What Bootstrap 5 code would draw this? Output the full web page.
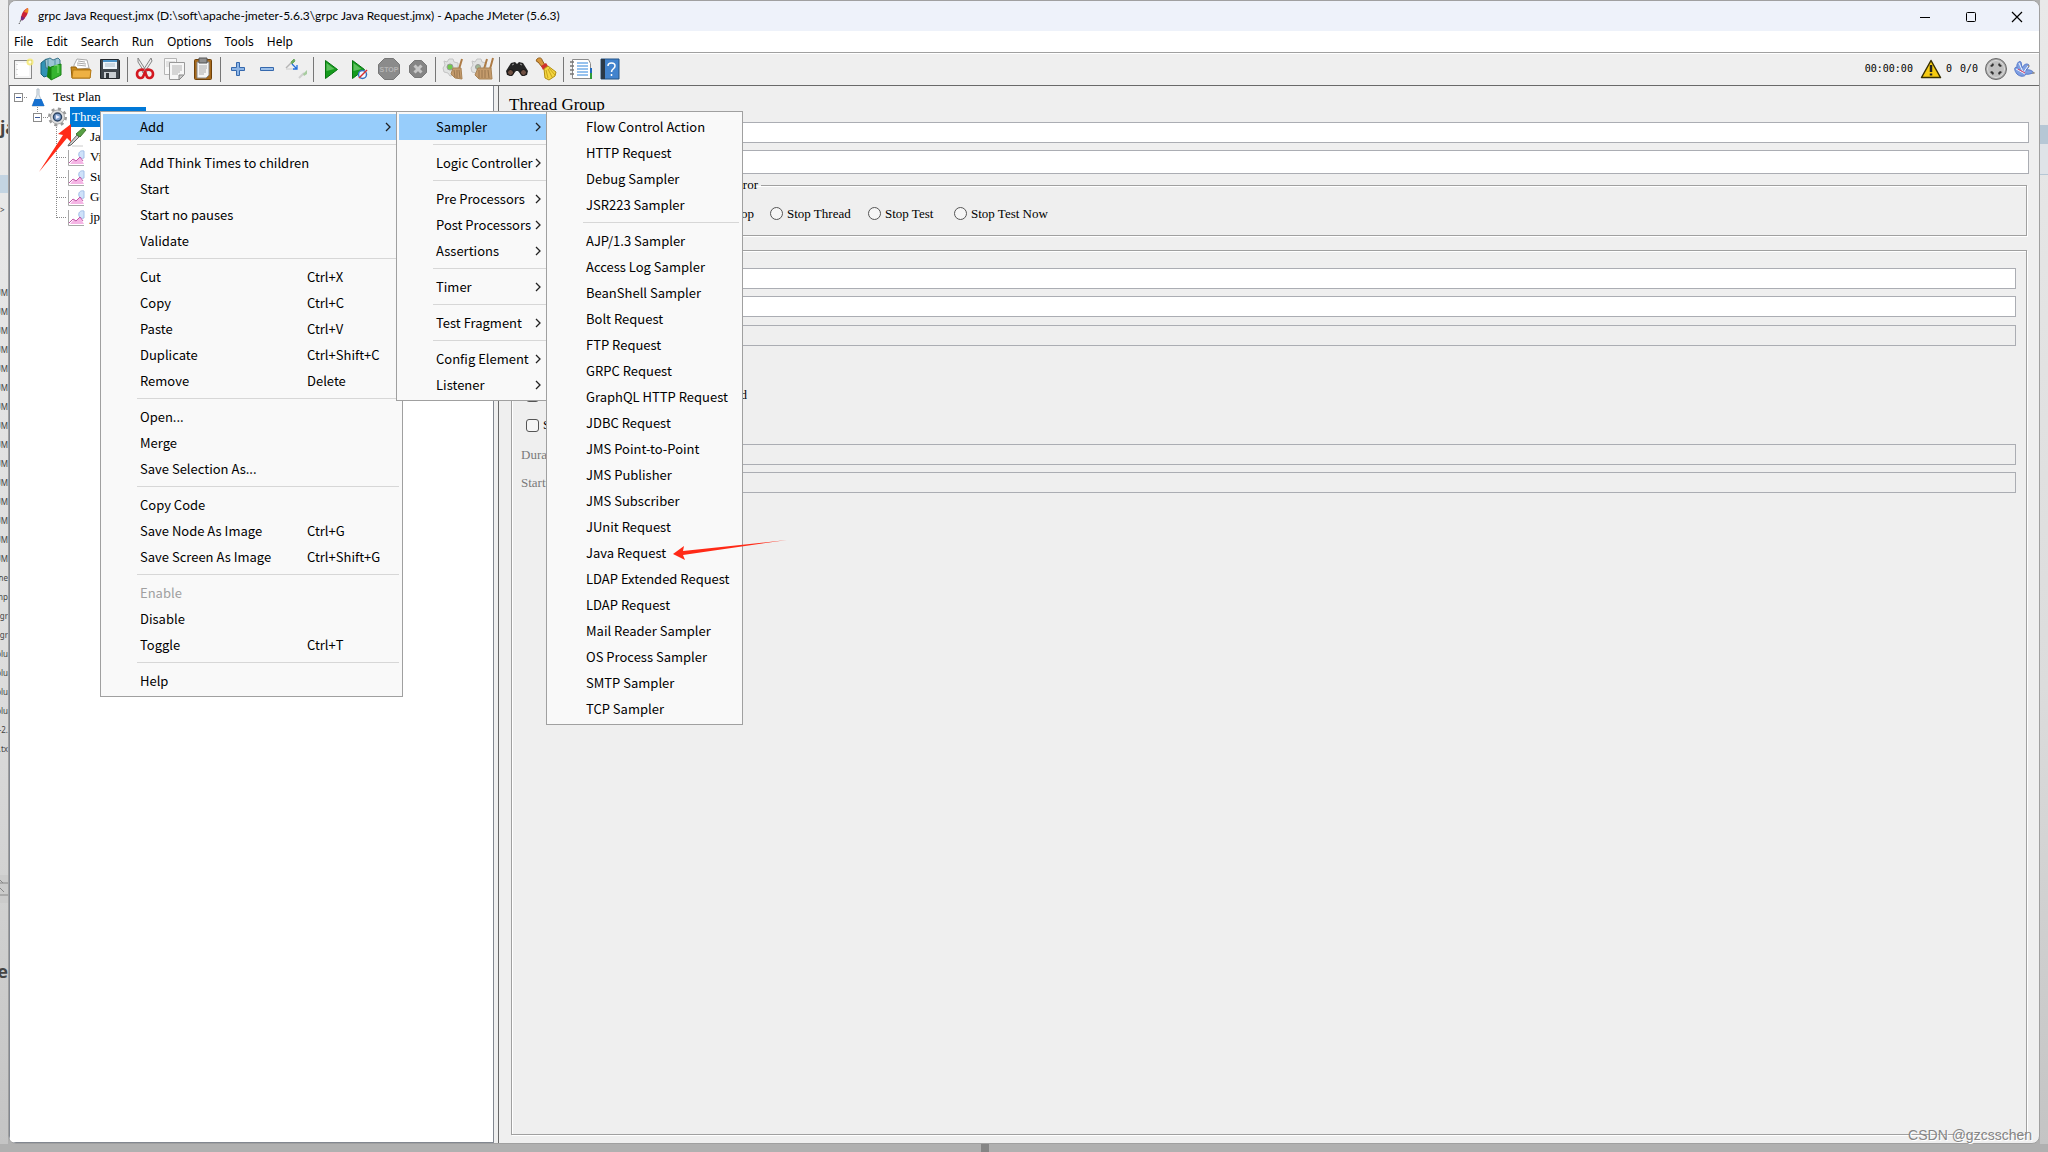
<!DOCTYPE html>
<html lang="en">
<head>
<meta charset="utf-8">
<meta name="viewport" content="width=device-width, initial-scale=1">
<title>grpc Java Request.jmx - Apache JMeter (5.6.3)</title>
<link rel="stylesheet" href="https://cdn.jsdelivr.net/npm/bootstrap@5.3.0/dist/css/bootstrap.min.css">
<script src="https://cdn.jsdelivr.net/npm/bootstrap@5.3.0/dist/js/bootstrap.bundle.min.js"></script>
<style>
  :root { --face: #efefef; --line: #a0a0a0; --dark: #696969; --ui: "Noto Sans CJK SC", "Noto Sans", sans-serif; }
  body { font: 13px/20px var(--ui); color: #000; background: #b0b0b0; }
  .side { width: 8px; flex: none; overflow: hidden; color: #444; font: 8px/19px "Noto Sans", sans-serif; }
  .side-left { background: linear-gradient(#ededed, #dcdcdc 60%, #c4c4c4); }
  .side-right { background: linear-gradient(#e9e9e9, #dcdcdc 60%, #c4c4c4); }
  .side-big { font-size: 18px; line-height: 30px; font-weight: 700; height: 30px; }
  .side-list div { height: 19px; line-height: 19px; white-space: nowrap; width: 8px; display: flex; justify-content: flex-end; }
  .desk-foot { height: 8px; background: #b0b0b0; }
  .desk-foot span { width: 8px; height: 8px; background: #858585; margin-left: 47.9%; }
  .app { border: 1px solid var(--line); border-radius: 8px; background: var(--face); overflow: hidden; min-width: 0; }
  .titlebar { height: 30px; background: #eef2fa; margin-right: -1px; }
  .titlebar .caption { font: 12px/18px Lato, "Noto Sans", sans-serif; }
  .titlebar button { width: 46px; height: 30px; border: 0; background: none; padding: 0; }
  .menus { height: 21px; background: #fff; padding-left: 5px; gap: 13px; }
  .menus button { border: 0; background: none; padding: 0; color: #000; font: 12px/20px "Noto Sans", sans-serif; }
  .tools { height: 34px; border-top: 1px solid var(--line); border-bottom: 1px solid var(--dark); box-shadow: inset 0 1px #fff; margin-left: -1px; }
  .tools button { width: 29px; height: 30px; border: 0; background: none; padding: 0; display: flex; align-items: center; justify-content: center; flex: none; }
  .tools svg, .status svg { width: 24px; height: 24px; display: block; flex: none; }
  .bar { width: 6px; flex: none; display: flex; justify-content: center; }
  .bar::before { content: ""; width: 1px; height: 25px; background: #777; }
  .status { font: 10px/14px "DejaVu Sans Mono", monospace; }
  .song { font-family: "Liberation Serif", serif; font-size: 13px; }
  .tree { width: 485px; flex: none; background: #fff; border: 1px solid #828790; border-top: 0; overflow: hidden; padding-top: 1px; }
  .tree ul { list-style: none; margin: 0; padding: 0; }
  .node { height: 20px; display: flex; align-items: center; white-space: nowrap; }
  .node svg { flex: none; display: block; }
  .node span { padding: 0 2px; line-height: 20px; }
  .node .picked { background: #0078d7; color: #fff; width: 76px; }
  .pane { border-left: 1px solid var(--dark); margin-left: 4px; padding: 0 10px 8px; min-width: 0; }
  .pane h1 { font-size: 17px; line-height: 34px; padding-top: 2px; margin: 0; font-weight: 400; }
  .field { display: flex; align-items: center; }
  .field label { width: 160px; flex: none; }
  .field input { flex: 1; min-width: 0; height: 21px; border: 1px solid #abadb3; background: #fff; padding: 0 3px; border-radius: 0; }
  .field input.tall { height: 24px; }
  .field input:disabled { background: var(--face); }
  .off label { color: #7a7a7a; }
  .group-box { border: 1px solid var(--line); box-shadow: 1px 1px #fff, inset 1px 1px #fff; margin: 0 2px; padding: 0 10px 0 9px; }
  .group-box legend { float: none; width: auto; margin: 0 0 0 -5px; padding: 0 3px 0 2px; font-size: 13px; line-height: 14px; }
  .group-box legend span { display: block; width: 240px; text-align: right; }
  .radios { display: grid; grid-template-columns: 80px 165px 98px 86px auto; height: 43px; align-items: center; padding-left: 4px; }
  .tick { display: flex; align-items: center; gap: 4px; white-space: nowrap; }
  .tick input { appearance: none; width: 13px; height: 13px; border: 1px solid #555; background: #f6f6f6; margin: 0; border-radius: 3px; flex: none; }
  .tick input[type=radio] { border-radius: 50%; }
  .tick .w-loop { width: 132px; text-align: right; }
  .tick .w-delay { width: 204px; text-align: right; }
  .tick-row { height: 30px; padding-left: 5px; }
  .pop { border: 1px solid var(--line); border-radius: 0; background: #f9f9f9; padding: 2px; margin: 0; font-size: 13px; color: #000; min-width: 0; display: block; position: absolute; }
  .pop .dropdown-item { height: 26px; padding: 0 9px 0 37px; line-height: 26px; color: #000; display: flex; align-items: center; background: none; }
  .pop .dropdown-item.lit { background: #97cdfb; }
  .pop .dropdown-item:disabled { color: #a0a0a0; }
  .pop .name { width: 167px; flex: none; }
  .pop .dropdown-divider { margin: 4px 1px 5px 34px; border-color: #d7d7d7; opacity: 1; }
  .pop svg { margin-left: auto; flex: none; }
  .pop-main { left: 100px; top: 111px; width: 303px; z-index: 10; }
  .pop-add { left: 396px; top: 111px; width: 157px; z-index: 11; }
  .pop-sampler { left: 546px; top: 111px; width: 197px; z-index: 12; }
  .arrow { position: absolute; z-index: 20; pointer-events: none; }
  .arrow-tree { left: 38px; top: 122px; }
  .arrow-java { left: 672px; top: 538px; }
  .credit { position: absolute; right: 16px; bottom: 7px; font: 14px/20px "Liberation Sans", sans-serif; color: #858585; text-shadow: 1px 1px #fff; z-index: 20; }
</style>
</head>
<body>
<div class="d-flex flex-column min-vh-100 position-relative overflow-hidden">
  <div class="d-flex flex-grow-1">
    <div class="side side-left" aria-hidden="true">
      <div style="height:112px"></div>
      <div class="side-big">ja</div>
      <div style="height:33px"></div>
      <div style="height:18px;background:#c3d4e2"></div>
      <div style="height:90px;padding-top:7px">&gt;</div>
      <div class="side-list">
        <div>UM</div><div>UM</div><div>UM</div><div>UM</div><div>UM</div><div>UM</div><div>UM</div><div>UM</div><div>UM</div><div>UM</div><div>UM</div><div>UM</div><div>UM</div><div>UM</div><div>UM</div>
        <div>ne</div><div>mp</div><div>gr</div><div>gr</div><div>olu</div><div>olu</div><div>olu</div><div>olu</div><div>-2.</div><div>.tx</div>
      </div>
      <div style="height:117px"></div>
      <svg width="8" height="28" viewBox="0 0 8 28" class="d-block"><path fill="#cbcbcb" d="M0 0h8v28H0z"/><path d="M0 5l3 3M0 8l8 0M0 13l4 4M0 20h8" stroke="#888" fill="none"/></svg>
      <div style="height:53px"></div>
      <div class="side-big d-flex justify-content-end">te</div>
    </div>

    <main class="app flex-grow-1 d-flex flex-column">
      <header class="titlebar d-flex align-items-center">
        <svg width="12" height="18" viewBox="0 0 12 18" style="margin-left:9px"><path d="M10 1C6 2 3 7 3 12l2 1c3-3 6-7 5-12z" fill="#cb2138"/><path d="M10 1C8 2 7 3 6 5l4 1c.3-2 .3-4 0-5z" fill="#f08a24"/><path d="M3 9l-.3 4 2 .5L7 11z" fill="#7a2a7d"/><path d="M3 13l-2 4" stroke="#555" stroke-dasharray="2 1"/></svg>
        <span class="caption flex-grow-1 ms-2">grpc Java Request.jmx (D:\soft\apache-jmeter-5.6.3\grpc Java Request.jmx) - Apache JMeter (5.6.3)</span>
        <button type="button" aria-label="Minimize"><svg width="12" height="12"><path d="M1 6.500h10" stroke="#000"/></svg></button>
        <button type="button" aria-label="Maximize"><svg width="12" height="12"><rect x="1.500" y="1.500" width="9" height="9" rx="1" fill="none" stroke="#000"/></svg></button>
        <button type="button" aria-label="Close"><svg width="12" height="12"><path d="M1 1l10 10M11 1L1 11" stroke="#000" stroke-width="1.200"/></svg></button>
      </header>
      <nav class="menus d-flex align-items-center" aria-label="Main menu">
        <button type="button">File</button><button type="button">Edit</button><button type="button">Search</button><button type="button">Run</button><button type="button">Options</button><button type="button">Tools</button><button type="button">Help</button>
      </nav>
      <div class="tools d-flex align-items-center" role="toolbar" aria-label="Tools">
        <button type="button" aria-label="New"><svg viewBox="0 0 24 24"><rect x="3.500" y="3.500" width="17" height="18" fill="#f4f4f4" stroke="#888"/><path d="M6 6h12v13H6z" fill="#fff"/><path d="M6 7v12" stroke="#bbb" stroke-dasharray="1 4"/><circle cx="19" cy="5" r="3.500" fill="#f5e96a" opacity=".8"/><circle cx="19" cy="5" r="1.500" fill="#fffde0"/></svg></button>
        <button type="button" aria-label="Templates"><svg viewBox="0 0 24 24"><path d="M1 6l5-4 4 2v14l-6 2-3-3z" fill="#3193b5" stroke="#17637e"/><path d="M5 3l5-2 3 2 5-2 2 2v8H6z" fill="#9cc5d4" stroke="#3c7389"/><path d="M8 1v9M15 2v8" stroke="#4f8ea5"/><path d="M11 10l10-3v11l-10 5z" fill="#36b52f" stroke="#198014"/><path d="M8 9l3 1v13l-4-3z" fill="#16820f"/><path d="M14 9l4-1v8" fill="none" stroke="#80df71"/></svg></button>
        <button type="button" aria-label="Open"><svg viewBox="0 0 24 24"><path d="M5 8l3-6 10 1 2 8-15 2z" fill="#fff" stroke="#aaa"/><path d="M9 4l7 1M8 6l9 1M8 8l9 1" stroke="#aaa"/><path d="M2 10h5l1 2h13v9H3z" fill="#c98b1b" stroke="#966009"/><path d="M4 13h18l-1 8H3z" fill="#eeb143" stroke="#b67a14"/></svg></button>
        <button type="button" aria-label="Save"><svg viewBox="0 0 24 24"><path d="M2.500 2.500h18l1 1v18h-19z" fill="#40474d" stroke="#23282c"/><path d="M5 3h14v9H5z" fill="#edf5fa"/><path d="M5 3h14v2H5z" fill="#4c94c8"/><path d="M7 7h10M7 9h10" stroke="#a8bac7"/><path d="M6 15h12v6H6z" fill="#c9ced2"/><path d="M8 16h3v5H8z" fill="#30363b"/></svg></button>
        <span class="bar"></span>
        <button type="button" aria-label="Cut"><svg viewBox="0 0 24 24"><path d="M5 1l9 14-2 1L5 5zM18 1L9 15l2 1 8-12z" fill="#eee" stroke="#858585"/><path d="M11 13c-3-1-7 0-7 4s4 5 6 3l2-5 2 5c2 2 6 1 6-3s-4-5-7-4" fill="none" stroke="#d31820" stroke-width="2.600"/></svg></button>
        <button type="button" aria-label="Copy"><svg viewBox="0 0 24 24"><path d="M2.500 1.500h12v16h-12z" fill="#f8f8f8" stroke="#b5b5b5"/><path d="M4 5h9M4 7h9M4 9h9" stroke="#ccc"/><path d="M7.500 5.500h15v12l-5 5h-10z" fill="#f7f7f7" stroke="#999"/><path d="M10 9h10M10 11h10M10 13h10M10 15h8M10 17h6" stroke="#b3b3b3"/><path d="M22 18h-5v5z" fill="#ccc" stroke="#888"/></svg></button>
        <button type="button" aria-label="Paste"><svg viewBox="0 0 24 24"><rect x="3.500" y="2.500" width="17" height="20" rx="1" fill="#a6691b" stroke="#6e410b"/><path d="M6 5h12v13l-3 3H6z" fill="#f5f5f5" stroke="#888"/><path d="M8 1h8v5H8z" fill="#909090" stroke="#555"/><path d="M8 9h8M8 11h8M8 13h7M8 15h7M8 17h5" stroke="#aaa"/></svg></button>
        <span class="bar"></span>
        <button type="button" aria-label="Expand"><svg viewBox="0 0 24 24"><path d="M10.500 5.500h3v5h5v3h-5v5h-3v-5h-5v-3h5z" fill="#8db5e5" stroke="#3568ad"/></svg></button>
        <button type="button" aria-label="Collapse"><svg viewBox="0 0 24 24"><path d="M5.500 10.500h13v3h-13z" fill="#9bbfe9" stroke="#3568ad"/></svg></button>
        <button type="button" aria-label="Toggle"><svg viewBox="0 0 24 24"><path d="M2 11l6-6" stroke="#b5b5b5" stroke-width="1.500"/><path d="M7 5l3-3 1 2-3 3z" fill="#6dab60" stroke="#6dab60"/><path d="M2 12h8" stroke="#ccc"/><path d="M8 7l5 5M13 8v4H9" stroke="#226fdd" stroke-width="1.300" fill="none"/><path d="M15 21l5-5" stroke="#d0d0d0" stroke-width="2"/><path d="M19 17l4-4v4l-3 2z" fill="#a8cca0"/></svg></button>
        <span class="bar"></span>
        <button type="button" aria-label="Start"><svg viewBox="0 0 24 24"><path d="M6.500 3.500l12 9-12 9z" fill="#159b1d" stroke="#087410"/><path d="M7.500 6l8 6-8 2z" fill="#5cc15c"/></svg></button>
        <button type="button" aria-label="Start no pauses"><svg viewBox="0 0 24 24"><path d="M4.500 3.500l12 9-12 9z" fill="#159b1d" stroke="#087410"/><path d="M5.500 6l8 6-8 2z" fill="#5cc15c"/><circle cx="14.500" cy="17.500" r="4" fill="#f4f8ff" stroke="#3671bd" stroke-width="1.500"/><path d="M11 21l8-8" stroke="#d82e2e" stroke-width="1.500"/></svg></button>
        <button type="button" aria-label="Stop"><svg viewBox="0 0 24 24"><path d="M7.500 1.500h9l6 6v9l-6 6h-9l-6-6v-9z" fill="#8b8b8b" stroke="#777"/><text x="12" y="15" text-anchor="middle" font-family="Liberation Sans" font-weight="700" font-size="7" fill="#b5b5b5">STOP</text></svg></button>
        <button type="button" aria-label="Shutdown"><svg viewBox="0 0 24 24"><path d="M8.500 3.500h7l5 5v7l-5 5h-7l-5-5v-7z" fill="#858585" stroke="#777"/><path d="M8.500 8.500l7 7M15.500 8.500l-7 7" stroke="#c6c6c6" stroke-width="3"/></svg></button>
        <span class="bar"></span>
        <button type="button" aria-label="Clear"><svg viewBox="0 0 24 24"><path d="M3 4l3 1 2-3h4l1 3 4 1v8l-3 4-5 1-2-3-4-1-1-4 2-3z" fill="#e1e3e2" stroke="#c4c4c4"/><circle cx="9" cy="10" r="3" fill="#71c84e" stroke="#999"/><path d="M21 2l-3 10" stroke="#ad7b45" stroke-width="2"/><path d="M12 11h8l1 11-7-1-4-4z" fill="#c49b6c" stroke="#a98355"/><path d="M13 13l1 7M16 13v8M18 13l1 8" stroke="#9a774e"/></svg></button>
        <button type="button" aria-label="Clear all"><svg viewBox="0 0 24 24"><path d="M2 4l3 1 2-3h4l1 3 4 1v8l-3 4-5 1-2-3-4-1-1-4 2-3z" fill="#e1e3e2" stroke="#c4c4c4"/><circle cx="8" cy="10" r="2.500" fill="#a1b893" stroke="#999"/><path d="M23 1l-3 11M17 2l-3 10" stroke="#ad7b45" stroke-width="2"/><path d="M8 11h13l1 11H9l-4-4z" fill="#c49b6c" stroke="#a98355"/><path d="M9 13v8M12 13v8M15 13v8M18 13l1 8" stroke="#9a774e"/></svg></button>
        <span class="bar"></span>
        <button type="button" aria-label="Search"><svg viewBox="0 0 24 24"><path d="M6 6l4-1 2 2 2-2 4 1 5 8-1 4-5 1-4-5h-2l-4 5-5-1-1-4z" fill="#252525"/><circle cx="5.500" cy="15.500" r="3" fill="#6f5042" stroke="#111"/><circle cx="18.500" cy="15.500" r="3" fill="#6f5042" stroke="#111"/><path d="M7 8l2-1M15 7l2 1" stroke="#999"/></svg></button>
        <button type="button" aria-label="Reset search"><svg viewBox="0 0 24 24"><path d="M3 2c2-2 5-1 5 1l3 5-3 2-4-5C2 5 2 3 3 2z" fill="#d6963c" stroke="#8c5a17"/><path d="M7 9l5-3 2 3-5 4z" fill="#d0312d"/><path d="M10 12l4-3 8 6-1 4-6 4-4-2z" fill="#f4d63f" stroke="#b08c10"/><path d="M12 13l2 8M14 12l4 8M15 11l6 7" stroke="#c7a11e"/></svg></button>
        <span class="bar"></span>
        <button type="button" aria-label="Function helper"><svg viewBox="0 0 24 24"><path d="M3.500 2.500h16l2 4v15h-18z" fill="#fff" stroke="#8c8c8c"/><path d="M1 5h4M1 9h4M1 13h4M1 17h4" stroke="#777" stroke-width="1.500"/><path d="M8 6h11M8 9h11M8 12h11M8 15h11M8 18h11" stroke="#2f85dd"/><path d="M21 11h2v5h-2z" fill="#2268bd"/><path d="M21 16h2v6h-2z" fill="#2e9b38"/></svg></button>
        <button type="button" aria-label="Help"><svg viewBox="0 0 24 24"><path d="M3 2h18v20H3z" fill="#4283cd" stroke="#245487"/><path d="M3 2h4v20H3z" fill="#2b3947"/><path d="M10 9c0-4 7-4 7 0 0 3-3.500 2.500-3.500 6M13.500 17v2" fill="none" stroke="#fff" stroke-width="1.500"/></svg></button>
        <div class="status d-flex align-items-center ms-auto">
          <span>00:00:00</span>
          <svg viewBox="0 0 24 24" style="margin-left:6px"><path d="M12 3.500l9.500 17h-19z" fill="#f6cb12" stroke="#393000" stroke-width="1.500" stroke-linejoin="round"/><path d="M12 8v7M12 16.500v2" stroke="#222" stroke-width="2.500"/></svg>
          <span style="margin-left:3px">0</span><span class="ms-2">0/0</span>
          <svg viewBox="0 0 24 24" style="margin-left:6px"><circle cx="12" cy="12" r="10.500" fill="#aaa" stroke="#6a6a6a"/><circle cx="12" cy="12" r="8.500" fill="#bfbfbf" stroke="#dedede"/><path d="M6 9l3-3 1 2-2 2zM15 6l3 3-2 1-2-2zM6 15l2-1 2 2-1 2zM18 15l-3 3-1-2 2-2z" fill="#333"/></svg>
          <svg viewBox="0 0 24 24" style="margin:0 3px 0 4px"><path d="M5 17C1 12 3 9 5 11 4 7 7 3 9 5c0 2 1 4 1 6 2-4 5-5 7-3 0 3-2 4-3 5 3-1 7 1 8 3-3 0-5 2-8 1-1 3-6 3-9 0z" fill="#7f9fe2" stroke="#5577c8"/><path d="M4 12l9 5M7 6l4 9M16 9l-5 7" stroke="#eef3fd"/><path d="M6 12l7 4" stroke="#d94267"/><path d="M16 8l1 2M20 16l3 0" stroke="#a8926a"/></svg>
        </div>
      </div>

      <div class="d-flex flex-grow-1">
        <nav class="tree song" aria-label="Test plan tree">
          <ul>
            <li class="node"><svg width="41" height="20"><g fill="#fff" stroke="#8b8b8b"><rect x="4.500" y="6.500" width="8" height="8"/></g><path d="M6 10.500h5" stroke="#3b5a9b"/><path d="M14 10.500h4" stroke="#888" stroke-dasharray="1 1"/><path d="M27 2h2v6l5 11H22l5-11z" fill="#e6edf3" stroke="#b1bdc7"/><path d="M24.500 12h7l3 7H22z" fill="#1670cf"/></svg><span>Test Plan</span></li>
            <li class="node"><svg width="60" height="20"><path d="M27.500 0v6M33 10.500h5" stroke="#888" stroke-dasharray="1 1"/><rect x="23.500" y="6.500" width="8" height="8" fill="#fff" stroke="#8b8b8b"/><path d="M25 10.500h5" stroke="#3b5a9b"/><circle cx="47.500" cy="10" r="8" fill="none" stroke="#999" stroke-width="3" stroke-dasharray="3 3.300"/><circle cx="47.500" cy="10" r="7" fill="#dedede" stroke="#aaa"/><circle cx="47.500" cy="10" r="4" fill="#7f9fca" stroke="#2d4464" stroke-width="1.500"/><path d="M46 8l4 2-4 2z" fill="#eef"/></svg><span class="picked">Thread Group</span></li>
            <li class="node"><svg width="78" height="20"><path d="M46.500 0v20" stroke="#888" stroke-dasharray="1 1"/><path d="M59 17l8-9 2 2-8 8-3 1z" fill="#ccc" stroke="#666"/><path d="M66 7l7-6 3 2-6 7z" fill="#58a044" stroke="#41792f"/><path d="M62 19h11" stroke="#ccc"/></svg><span>Java Request</span></li>
            <li class="node"><svg width="78" height="20"><path d="M46.500 0v20M47 10.500h10" stroke="#888" stroke-dasharray="1 1"/><path d="M58.500 3v15.500H74" stroke="#aaa" fill="none"/><path d="M74 4c-4-1-6 2-5 5 1 2 3 3 5 2z" fill="#cfe2fa" stroke="#a3bfe8"/><path d="M60 17l4-5 2 2 4-4 4 7z" fill="#f5b5e5"/><path d="M59 16l4-4 3 2 4-4 3 4" fill="none" stroke="#c158a8"/></svg><span>View Results Tree</span></li>
            <li class="node"><svg width="78" height="20"><path d="M46.500 0v20M47 10.500h10" stroke="#888" stroke-dasharray="1 1"/><path d="M58.500 3v15.500H74" stroke="#aaa" fill="none"/><path d="M74 4c-4-1-6 2-5 5 1 2 3 3 5 2z" fill="#cfe2fa" stroke="#a3bfe8"/><path d="M60 17l4-5 2 2 4-4 4 7z" fill="#f5b5e5"/><path d="M59 16l4-4 3 2 4-4 3 4" fill="none" stroke="#c158a8"/></svg><span>Summary Report</span></li>
            <li class="node"><svg width="78" height="20"><path d="M46.500 0v20M47 10.500h10" stroke="#888" stroke-dasharray="1 1"/><path d="M58.500 3v15.500H74" stroke="#aaa" fill="none"/><path d="M74 4c-4-1-6 2-5 5 1 2 3 3 5 2z" fill="#cfe2fa" stroke="#a3bfe8"/><path d="M60 17l4-5 2 2 4-4 4 7z" fill="#f5b5e5"/><path d="M59 16l4-4 3 2 4-4 3 4" fill="none" stroke="#c158a8"/></svg><span>Generate Summary</span></li>
            <li class="node"><svg width="78" height="20"><path d="M46.500 0v11M47 10.500h10" stroke="#888" stroke-dasharray="1 1"/><path d="M58.500 3v15.500H74" stroke="#aaa" fill="none"/><path d="M74 4c-4-1-6 2-5 5 1 2 3 3 5 2z" fill="#cfe2fa" stroke="#a3bfe8"/><path d="M60 17l4-5 2 2 4-4 4 7z" fill="#f5b5e5"/><path d="M59 16l4-4 3 2 4-4 3 4" fill="none" stroke="#c158a8"/></svg><span>jp@gc - Transactions</span></li>
          </ul>
        </nav>

        <form class="pane song flex-grow-1 d-flex flex-column">
          <h1>Thread Group</h1>
          <div class="field"><label for="f-name">Name:</label><input id="f-name" type="text"></div>
          <div class="field" style="margin-top:7px"><label for="f-comments">Comments:</label><input class="tall" id="f-comments" type="text"></div>
          <fieldset class="group-box" style="margin-top:4px">
            <legend><span>Action to be taken after a Sampler error</span></legend>
            <div class="radios">
              <label class="tick"><input type="radio" name="err">Continue</label>
              <label class="tick"><input type="radio" name="err"><span class="w-loop">Start Next Thread Loop</span></label>
              <label class="tick"><input type="radio" name="err">Stop Thread</label>
              <label class="tick"><input type="radio" name="err">Stop Test</label>
              <label class="tick"><input type="radio" name="err">Stop Test Now</label>
            </div>
          </fieldset>
          <fieldset class="group-box flex-grow-1" style="margin-top:7px">
            <legend>Thread Properties</legend>
            <div class="field" style="margin-top:11px"><label for="f-num">Number of Threads (users):</label><input id="f-num" type="text"></div>
            <div class="field" style="margin-top:7px"><label for="f-ramp">Ramp-up period (seconds):</label><input id="f-ramp" type="text"></div>
            <div class="field off" style="margin-top:8px"><label for="f-loop">Loop Count:</label><input id="f-loop" type="text" disabled></div>
            <div style="margin:4px 0">
              <label class="tick tick-row"><input type="checkbox">Same user on each iteration</label>
              <label class="tick tick-row"><input type="checkbox"><span class="w-delay">Delay Thread creation until needed</span></label>
              <label class="tick tick-row"><input type="checkbox">Specify Thread lifetime</label>
            </div>
            <div class="field off"><label for="f-dur">Duration (seconds):</label><input id="f-dur" type="text" disabled></div>
            <div class="field off" style="margin-top:7px"><label for="f-delay">Startup delay (seconds):</label><input id="f-delay" type="text" disabled></div>
          </fieldset>
        </form>
      </div>
    </main>

    <div class="side side-right" aria-hidden="true">
      <div style="height:125px"></div>
      <div style="height:19px;background:#b6c7d5"></div>
      <div style="height:31px;background:#dfe3e8;border-bottom:1px solid #b6c7d5"></div>
    </div>
  </div>
  <div class="desk-foot d-flex"><span></span></div>

  <div class="pop pop-main dropdown-menu" role="menu">
    <button class="dropdown-item lit" type="button"><span class="name">Add</span><svg width="6" height="10"><path d="M1 1l4 4-4 4" fill="none" stroke="#222" stroke-width="1.300"/></svg></button>
    <hr class="dropdown-divider">
    <button class="dropdown-item" type="button">Add Think Times to children</button>
    <button class="dropdown-item" type="button">Start</button>
    <button class="dropdown-item" type="button">Start no pauses</button>
    <button class="dropdown-item" type="button">Validate</button>
    <hr class="dropdown-divider">
    <button class="dropdown-item" type="button"><span class="name">Cut</span><span>Ctrl+X</span></button>
    <button class="dropdown-item" type="button"><span class="name">Copy</span><span>Ctrl+C</span></button>
    <button class="dropdown-item" type="button"><span class="name">Paste</span><span>Ctrl+V</span></button>
    <button class="dropdown-item" type="button"><span class="name">Duplicate</span><span>Ctrl+Shift+C</span></button>
    <button class="dropdown-item" type="button"><span class="name">Remove</span><span>Delete</span></button>
    <hr class="dropdown-divider">
    <button class="dropdown-item" type="button">Open...</button>
    <button class="dropdown-item" type="button">Merge</button>
    <button class="dropdown-item" type="button">Save Selection As...</button>
    <hr class="dropdown-divider">
    <button class="dropdown-item" type="button">Copy Code</button>
    <button class="dropdown-item" type="button"><span class="name">Save Node As Image</span><span>Ctrl+G</span></button>
    <button class="dropdown-item" type="button"><span class="name">Save Screen As Image</span><span>Ctrl+Shift+G</span></button>
    <hr class="dropdown-divider">
    <button class="dropdown-item" type="button" disabled>Enable</button>
    <button class="dropdown-item" type="button">Disable</button>
    <button class="dropdown-item" type="button"><span class="name">Toggle</span><span>Ctrl+T</span></button>
    <hr class="dropdown-divider">
    <button class="dropdown-item" type="button">Help</button>
  </div>

  <div class="pop pop-add dropdown-menu" role="menu">
    <button class="dropdown-item lit" type="button">Sampler<svg width="6" height="10"><path d="M1 1l4 4-4 4" fill="none" stroke="#222" stroke-width="1.300"/></svg></button>
    <hr class="dropdown-divider">
    <button class="dropdown-item" type="button">Logic Controller<svg width="6" height="10"><path d="M1 1l4 4-4 4" fill="none" stroke="#222" stroke-width="1.300"/></svg></button>
    <hr class="dropdown-divider">
    <button class="dropdown-item" type="button">Pre Processors<svg width="6" height="10"><path d="M1 1l4 4-4 4" fill="none" stroke="#222" stroke-width="1.300"/></svg></button>
    <button class="dropdown-item" type="button">Post Processors<svg width="6" height="10"><path d="M1 1l4 4-4 4" fill="none" stroke="#222" stroke-width="1.300"/></svg></button>
    <button class="dropdown-item" type="button">Assertions<svg width="6" height="10"><path d="M1 1l4 4-4 4" fill="none" stroke="#222" stroke-width="1.300"/></svg></button>
    <hr class="dropdown-divider">
    <button class="dropdown-item" type="button">Timer<svg width="6" height="10"><path d="M1 1l4 4-4 4" fill="none" stroke="#222" stroke-width="1.300"/></svg></button>
    <hr class="dropdown-divider">
    <button class="dropdown-item" type="button">Test Fragment<svg width="6" height="10"><path d="M1 1l4 4-4 4" fill="none" stroke="#222" stroke-width="1.300"/></svg></button>
    <hr class="dropdown-divider">
    <button class="dropdown-item" type="button">Config Element<svg width="6" height="10"><path d="M1 1l4 4-4 4" fill="none" stroke="#222" stroke-width="1.300"/></svg></button>
    <button class="dropdown-item" type="button">Listener<svg width="6" height="10"><path d="M1 1l4 4-4 4" fill="none" stroke="#222" stroke-width="1.300"/></svg></button>
  </div>

  <div class="pop pop-sampler dropdown-menu" role="menu">
    <button class="dropdown-item" type="button">Flow Control Action</button>
    <button class="dropdown-item" type="button">HTTP Request</button>
    <button class="dropdown-item" type="button">Debug Sampler</button>
    <button class="dropdown-item" type="button">JSR223 Sampler</button>
    <hr class="dropdown-divider">
    <button class="dropdown-item" type="button">AJP/1.3 Sampler</button>
    <button class="dropdown-item" type="button">Access Log Sampler</button>
    <button class="dropdown-item" type="button">BeanShell Sampler</button>
    <button class="dropdown-item" type="button">Bolt Request</button>
    <button class="dropdown-item" type="button">FTP Request</button>
    <button class="dropdown-item" type="button">GRPC Request</button>
    <button class="dropdown-item" type="button">GraphQL HTTP Request</button>
    <button class="dropdown-item" type="button">JDBC Request</button>
    <button class="dropdown-item" type="button">JMS Point-to-Point</button>
    <button class="dropdown-item" type="button">JMS Publisher</button>
    <button class="dropdown-item" type="button">JMS Subscriber</button>
    <button class="dropdown-item" type="button">JUnit Request</button>
    <button class="dropdown-item" type="button">Java Request</button>
    <button class="dropdown-item" type="button">LDAP Extended Request</button>
    <button class="dropdown-item" type="button">LDAP Request</button>
    <button class="dropdown-item" type="button">Mail Reader Sampler</button>
    <button class="dropdown-item" type="button">OS Process Sampler</button>
    <button class="dropdown-item" type="button">SMTP Sampler</button>
    <button class="dropdown-item" type="button">TCP Sampler</button>
  </div>

  <svg class="arrow arrow-tree" width="36" height="52" viewBox="0 0 36 52"><path d="M33 2L20 12l5 1L1 50l28-34 4 4z" fill="#ff2a17"/></svg>
  <svg class="arrow arrow-java" width="116" height="24" viewBox="0 0 116 24"><path d="M1 16l11-8-1 5L115 2 11 17l2 5z" fill="#ff2a17"/></svg>
  <div class="credit">CSDN @gzcsschen</div>
</div>
</body>
</html>
